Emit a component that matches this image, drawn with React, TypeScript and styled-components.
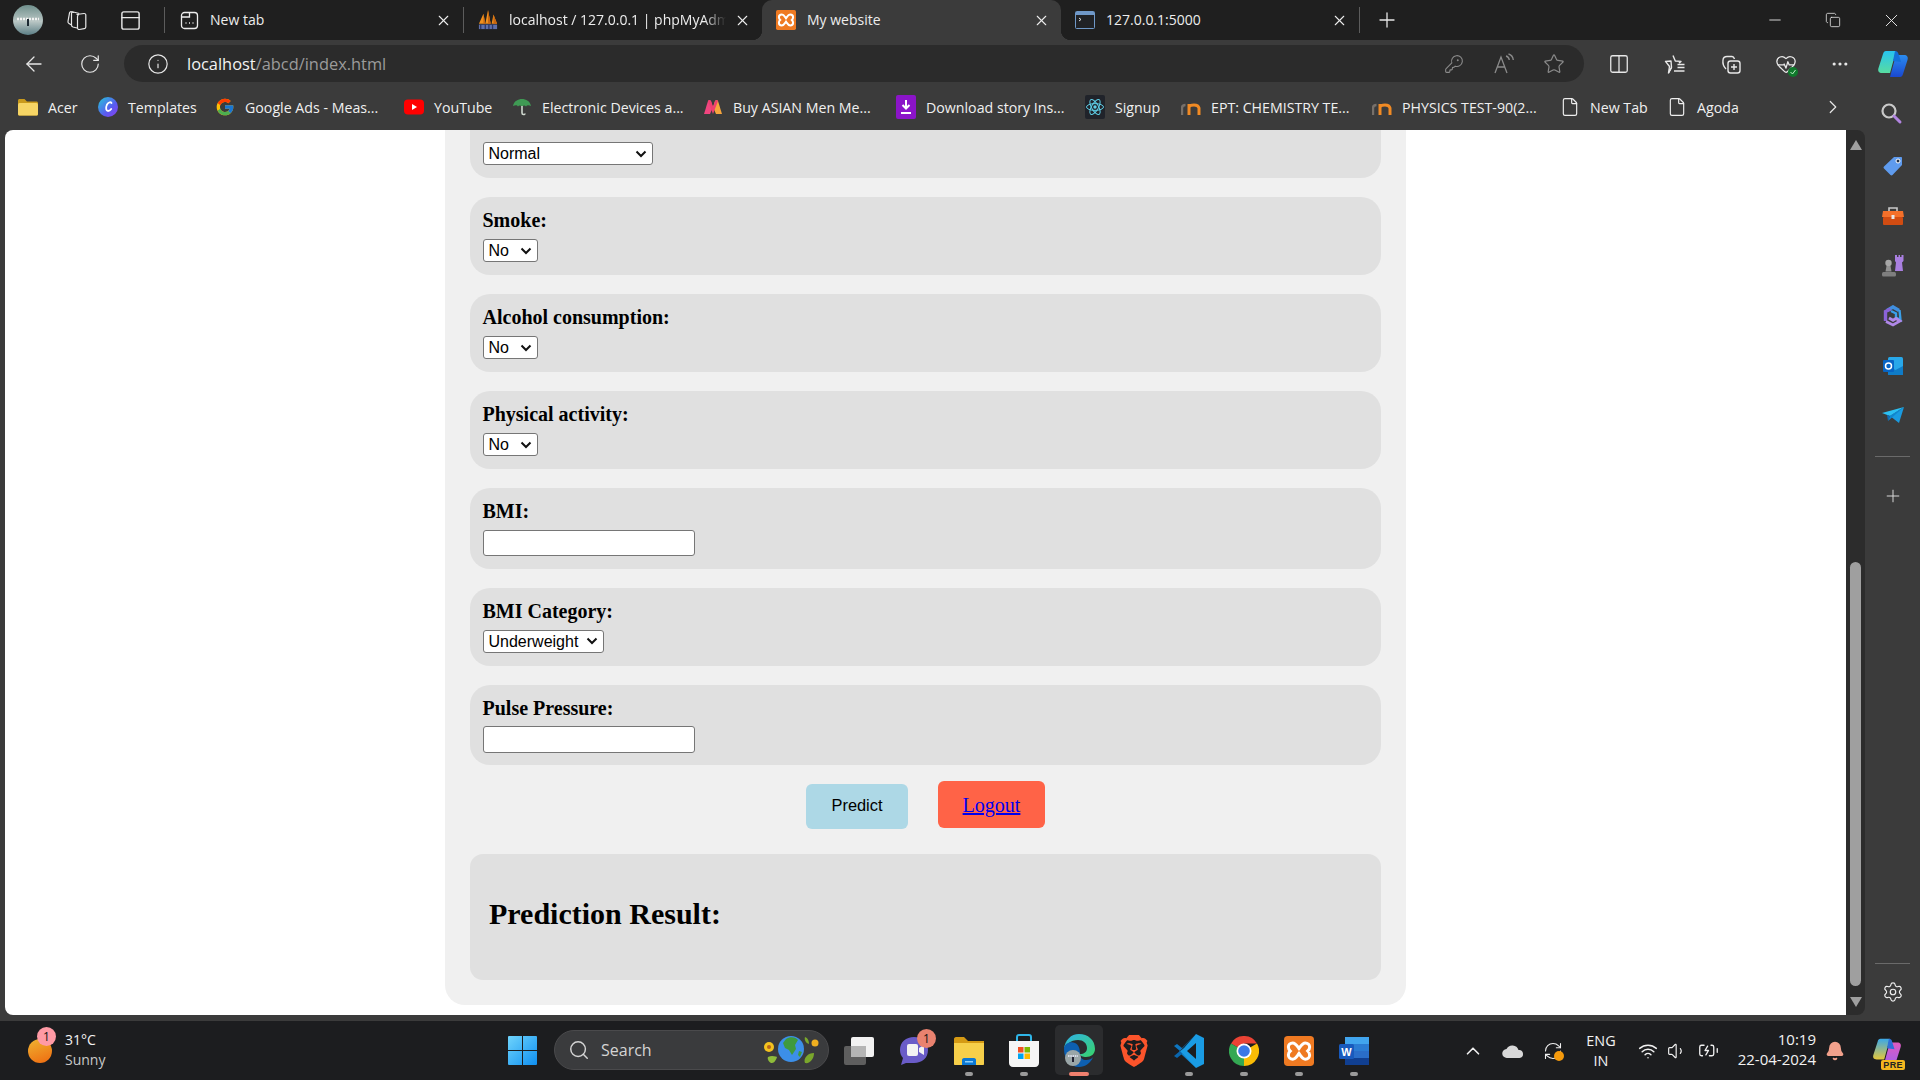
import React from "react";
import styled, { createGlobalStyle } from "styled-components";
import {
  ArrowLeft, RotateCw, Info, KeyRound, Star, Columns2, HeartPulse, MoreHorizontal, X, Plus, Minus, Search,
  Settings, ChevronRight, ChevronUp, File, Wifi, Volume1, BatteryCharging, RefreshCw, Bell, Copy, PanelTop,
} from "lucide-react";
import { FcGoogle } from "react-icons/fc";
import { SiBrave } from "react-icons/si";

const Global = createGlobalStyle`
  html, body { margin: 0; padding: 0; width: 1920px; height: 1080px; overflow: hidden; background: #3b3b3b; }
  * { box-sizing: border-box; }
`;

const UI = `"Open Sans", "Noto Sans", sans-serif`;
const SERIF = `"Liberation Serif", "Times New Roman", serif`;
const ARIAL = `"Liberation Sans", Arial, sans-serif`;
const CHEVRON = `url("data:image/svg+xml,%3Csvg xmlns='http://www.w3.org/2000/svg' width='12' height='8' viewBox='0 0 12 8'%3E%3Cpath d='M1.5 1.5 6 6l4.500-4.500' fill='none' stroke='%23111' stroke-width='2'/%3E%3C/svg%3E")`;

const Shell = styled.div`
  width: 1920px; height: 1080px; display: flex; flex-direction: column; background: #3b3b3b; overflow: hidden;
  font-family: ${UI};
`;

/* ---------- title bar ---------- */
const TitleBar = styled.div`height: 40px; background: #1f1f1f; display: flex; align-items: stretch; flex: none;`;
const TitleSlot = styled.div<{ $w: number }>`
  width: ${(p) => p.$w}px; flex: none; display: flex; align-items: center; justify-content: center; color: #e8e8e8;
`;
const TitleLead = styled.div`width: 164px; flex: none; display: flex; align-items: center; padding-left: 13px; color: #e8e8e8;`;
const LeadSlot = styled.div<{ $gap: number }>`width: 30px; margin-left: ${(p) => p.$gap}px; display: flex; align-items: center; justify-content: center;`;
const Divider = styled.div`width: 1px; height: 26px; margin-top: 7px; background: #5c5c5c; flex: none;`;
const Tab = styled.div<{ $active?: boolean }>`
  position: relative; width: ${(p) => (p.$active ? 299 : 298)}px; flex: none; display: flex; align-items: center;
  padding: 0 11px 0 14px; color: #ededed; font-size: 14px;
  background: ${(p) => (p.$active ? "#3b3b3b" : "transparent")};
  border-radius: ${(p) => (p.$active ? "10px 10px 0 0" : "0")};
  ${(p) =>
    p.$active
      ? `&::before, &::after { content: ""; position: absolute; bottom: 0; width: 10px; height: 10px; }
         &::before { left: -10px; background: radial-gradient(circle at 0 0, transparent 10px, #3b3b3b 10.5px); }
         &::after { right: -10px; background: radial-gradient(circle at 100% 0, transparent 10px, #3b3b3b 10.5px); }`
      : ""}
`;
const TabIcon = styled.span`width: 20px; height: 20px; flex: none; display: flex; align-items: center; justify-content: center; margin-right: 11px;`;
const TabTitle = styled.span`flex: 1; min-width: 0; overflow: hidden; white-space: nowrap; margin-right: 8px; margin-top: -1px;`;
const TabTitleFaded = styled(TabTitle)`
  -webkit-mask-image: linear-gradient(to right, #000 90%, transparent);
  mask-image: linear-gradient(to right, #000 90%, transparent);
`;
const WindowControls = styled.div`margin-left: auto; display: flex;`;

/* ---------- toolbar ---------- */
const Toolbar = styled.div`height: 48px; flex: none; display: flex; align-items: flex-start; padding-top: 5px;`;
const NavSlot = styled.div<{ $w: number }>`
  width: ${(p) => p.$w}px; height: 37px; flex: none; display: flex; align-items: center; justify-content: center; color: #e6e6e6;
`;
const AddressBar = styled.div`
  width: 1460px; height: 37px; flex: none; background: #2b2b2b; border-radius: 19px; display: flex; align-items: center;
  padding-left: 23px; margin-left: 12px; color: #e6e6e6;
`;
const Url = styled.div`margin-left: 18px; font-size: 16.4px; color: #9b9b9b; white-space: nowrap;`;
const UrlHost = styled.span`color: #f2f2f2;`;
const AddressTools = styled.div`margin-left: auto; display: flex; margin-right: 5px; color: #8b8b8b;`;
const AddressTool = styled.div`width: 50px; height: 37px; display: flex; align-items: center; justify-content: center;`;
const ToolbarRight = styled.div`display: flex; margin-left: 7px;`;
const ToolSlot = styled.div<{ $w: number }>`
  width: ${(p) => p.$w}px; height: 37px; display: flex; align-items: center; justify-content: center; color: #e8e8e8;
`;

/* ---------- bookmarks ---------- */
const BookmarksBar = styled.div`height: 42px; flex: none; display: flex; align-items: flex-start; padding-left: 18px; padding-top: 7px;`;
const Bookmark = styled.div<{ $w: number }>`
  width: ${(p) => p.$w}px; flex: none; height: 24px; display: flex; align-items: center; gap: 10px; margin-right: 20px;
  color: #f0f0f0; font-size: 14.2px; white-space: nowrap;
`;
const BookmarkIcon = styled.span`width: 20px; height: 20px; flex: none; display: flex; align-items: center; justify-content: center; color: #eee;`;
const BookmarkMore = styled.div`width: 24px; height: 24px; margin-left: 60px; color: #e6e6e6; display: flex; align-items: center; justify-content: center;`;
const SearchSlot = styled.div`width: 24px; height: 24px; margin-left: 34px; margin-top: 6px; display: flex; align-items: center; justify-content: center;`;

/* ---------- main ---------- */
const Middle = styled.div`flex: 1; min-height: 0; display: flex; align-items: stretch;`;
const Viewport = styled.div`
  margin-left: 5px; margin-bottom: 6px; flex: 1; min-width: 0; background: #fff; border-top-left-radius: 8px; border-bottom-left-radius: 8px;
  overflow: hidden; padding-left: 440px;
`;
const Container = styled.main`
  width: 961px; height: 875px; background: #f0f0f0; border-radius: 0 0 20px 20px; padding: 0 25px; display: flex; flex-direction: column;
`;
const Group = styled.div`
  background: #e0e0e0; border-radius: 20px; padding: 12px 12.5px 13px; margin-bottom: 19px; flex: none;
`;
const ClippedGroup = styled(Group)`
  height: 48px; padding-top: 12px; border-radius: 0 0 20px 20px;
`;
const Label = styled.label`
  display: block; font-family: ${SERIF}; font-weight: 700; font-size: 20px; line-height: 22px; color: #000; margin-bottom: 8px;
`;
const Select = styled.select<{ $w: number }>`
  display: block; width: ${(p) => p.$w}px; height: 23px; font-family: ${ARIAL}; font-size: 16px; color: #000;
  appearance: none; -webkit-appearance: none;
  background: #fff ${CHEVRON} no-repeat right 5px center;
  border: 1px solid #767676; border-radius: 3px; padding: 0 0 0 5px; margin: 0;
`;
const TextInput = styled.input`
  display: block; width: 212px; height: 26.5px; background: #fff; border: 1px solid #767676; border-radius: 3px; margin: 0; padding: 0 4px;
`;
const InputGroup = styled(Group)`padding-bottom: 12.5px;`;
const InputLabel = styled(Label)`margin-bottom: 7.5px;`;
const ButtonRow = styled.div`display: flex; justify-content: center; align-items: flex-start; gap: 30px; margin-top: -3px; height: 48px; flex: none;`;
const PredictButton = styled.button`
  width: 102px; height: 45px; margin-top: 3px; background: #add8e6; border: none; border-radius: 6px; color: #000;
  font-family: ${ARIAL}; font-size: 16.4px; padding: 0 0 3px;
`;
const LogoutBox = styled.div`
  width: 107px; height: 47px; background: #ff6347; border-radius: 6px; display: flex; align-items: center; justify-content: center;
  font-family: ${SERIF}; font-size: 20px; padding-top: 2px;
`;
const LogoutLink = styled.a`color: #0000ee; text-decoration: underline;`;
const ResultBox = styled.section`
  height: 126px; margin-top: 25px; flex: none; background: #e0e0e0; border-radius: 13px; display: flex; align-items: center; padding: 0 0 6px 19px;
`;
const ResultTitle = styled.h2`margin: 0; font-family: ${SERIF}; font-weight: 700; font-size: 30px; color: #000;`;

/* ---------- scrollbar + sidebar ---------- */
const ScrollTrack = styled.div`
  width: 19px; flex: none; margin-bottom: 6px; background: #2c2c2c; border-radius: 0 8px 8px 0; display: flex; flex-direction: column; align-items: center; padding-top: 10px;
`;
const ArrowUp = styled.div`width: 0; height: 0; border-left: 6.5px solid transparent; border-right: 6.5px solid transparent; border-bottom: 10px solid #9f9f9f;`;
const Thumb = styled.div`width: 11px; height: 424px; margin-top: 412px; background: #9f9f9f; border-radius: 6px;`;
const ArrowDown = styled.div`width: 0; height: 0; margin-top: 11px; border-left: 6.5px solid transparent; border-right: 6.5px solid transparent; border-top: 10px solid #9f9f9f;`;
const Sidebar = styled.aside`width: 55px; flex: none; display: flex; flex-direction: column; align-items: center; padding: 11px 0 9px;`;
const SideSlot = styled.div`width: 55px; height: 50px; flex: none; display: flex; align-items: center; justify-content: center; color: #d8d8d8;`;
const SideRule = styled.div`width: 35px; height: 1px; background: #6a6a6a; flex: none; margin: 15px 0 14px;`;
const SideFoot = styled.div`margin-top: auto; display: flex; flex-direction: column; align-items: center;`;
const SideFootRule = styled.div`width: 35px; height: 1px; background: #6a6a6a; margin-bottom: 8px;`;
const GearSlot = styled.div`width: 55px; height: 40px; display: flex; align-items: center; justify-content: center; color: #eee;`;

/* ---------- taskbar ---------- */
const Taskbar = styled.footer`height: 59px; flex: none; background: #1c1d1f; display: flex; align-items: stretch; color: #f2f2f2; position: relative;`;
const Weather = styled.div`width: 494px; flex: none; padding-left: 28px; display: flex; align-items: center; gap: 13px; font-size: 14px;`;
const WeatherIcon = styled.div`
  position: relative; width: 24px; height: 24px; margin-top: 1px; border-radius: 50%; background: linear-gradient(160deg, #efb431, #ee6a10); flex: none;
`;
const WeatherBadge = styled.span`
  position: absolute; left: 9px; top: -12px; width: 19px; height: 19px; border-radius: 50%; background: #ff9aa5; color: #111; font-size: 12px;
  display: flex; align-items: center; justify-content: center;
`;
const WeatherText = styled.div`line-height: 20px; margin-top: -1px;`;
const WeatherSub = styled.div`color: #c9c9c9;`;
const StartSlot = styled.div`width: 29px; margin-left: 14px; flex: none; display: flex; align-items: center;`;
const SearchPill = styled.div`
  width: 275px; height: 40px; margin: 9px 0 0 17px; flex: none; border-radius: 20px; background: #3a3b3d; border: 1px solid #4a4a4c; display: flex; align-items: center;
  padding-left: 13px; gap: 11px; color: #d4d4d4; font-size: 16px;
`;
const SearchArt = styled.span`margin-left: auto; margin-right: 7px; display: flex;`;
const TaskIcons = styled.div`display: flex; margin-left: 2px;`;
const TaskIconSlot = styled.div<{ $active?: boolean }>`
  position: relative; width: 55px; height: 59px; flex: none; display: flex; align-items: center; justify-content: center;
  ${(p) => (p.$active ? `&::before { content: ""; position: absolute; left: 4px; right: 3px; top: 4px; bottom: 5px; background: #2b2c2e; border-radius: 5px; }` : "")}
  & > svg { position: relative; }
`;
const RunPill = styled.span<{ $active?: boolean }>`
  position: absolute; bottom: 4px; left: 50%; transform: translateX(-50%); height: 4px; border-radius: 2px;
  width: ${(p) => (p.$active ? 20 : 8)}px; background: ${(p) => (p.$active ? "#f0806e" : "#9a9a9a")};
`;
const TaskBadge = styled.span`
  position: absolute; left: 31px; top: 8px; width: 19px; height: 19px; border-radius: 50%; background: #e9826f; color: #111; font-size: 12px;
  display: flex; align-items: center; justify-content: center;
`;
const Tray = styled.div`display: flex; margin-left: 72px; align-items: center;`;
const TraySlot = styled.div<{ $w: number }>`width: ${(p) => p.$w}px; flex: none; position: relative; display: flex; align-items: center; justify-content: center; color: #f0f0f0;`;
const SyncDot = styled.span`position: absolute; right: 9px; bottom: 0; width: 10px; height: 10px; border-radius: 50%; background: #f59a0c;`;
const Lang = styled.div`width: 56px; margin-right: 5px; flex: none; text-align: center; font-size: 14.4px; line-height: 20px; margin-top: 1px;`;
const Clock = styled.div`width: 92px; flex: none; text-align: right; font-size: 15px; line-height: 20px; white-space: nowrap; margin-top: -3px;`;
const CopilotPre = styled.span`
  position: absolute; right: 2px; bottom: 10px; background: #f3b61f; color: #222; font-family: ${ARIAL}; font-weight: 700; font-size: 9px; line-height: 10px; padding: 0 2px; border-radius: 2px; letter-spacing: 0.4px;
`;
const CopilotBox = styled.div`position: relative; width: 40px; height: 59px; margin-left: 13px; display: flex; align-items: center; justify-content: center;`;
const HealthBox = styled.div`position: relative; display: flex;`;
const HealthMark = styled.span`
  position: absolute; right: -1px; bottom: -2px; width: 10px; height: 10px; display: flex;
`;

/* ---------- drawings ---------- */
const Avatar = () => (
  <svg width="30" height="30" viewBox="0 0 30 30">
    <defs><linearGradient id="av" x1="0" y1="0" x2="0" y2="1"><stop offset="0" stopColor="#6f8f8c" /><stop offset=".55" stopColor="#b9c6c4" /><stop offset="1" stopColor="#5c7f86" /></linearGradient></defs>
    <circle cx="15" cy="15" r="15" fill="url(#av)" />
    <path d="M4 14h22" stroke="#f2f2f2" strokeWidth="2.5" strokeDasharray="2 1" />
    <path d="M14 14h2v7h-2z" fill="#1c2a33" />
  </svg>
);
const Workspaces = () => (
  <svg width="24" height="24" viewBox="0 0 24 24" fill="none" stroke="currentColor" strokeWidth="1.2">
    <path d="M11.500 6.500 19 5.500c1-.1 1.800.6 1.800 1.500v12c0 1-.6 1.600-1.500 1.700l-5 .8c-1 .1-1.800-.6-1.800-1.500V8.500c0-1 .6-1.800 1.500-2" />
    <path d="M12 20 8 19c-1-.3-1.500-1-1.500-2V5.500c0-1 .8-1.800 1.800-1.500l6 1.500" />
    <path d="M6.500 17 4 15.500c-.8-.5-1.200-1.200-1-2.200L4.500 5c.2-1 1-1.500 2-1.200L9 4.500" />
  </svg>
);
const TabNew = () => (
  <svg width="19" height="19" viewBox="0 0 19 19" fill="none" stroke="currentColor" strokeWidth="1.3">
    <rect x="1.5" y="1.5" width="16" height="16" rx="3" /><path d="M1.5 6h8V1.5" />
    <path d="M5.5 12h1M9 12h1M12.5 12h1" strokeWidth="1.6" />
  </svg>
);
const PmaIcon = () => (
  <svg width="22" height="22" viewBox="0 0 22 22">
    <path d="M1 15 6 4l2 11zM8 15 11 0l3 15zM15 15l2-10 4 10z" fill="#f0901e" />
    <path d="M6 4l2 11H6zM11 0l3 15h-3zM17 5l4 10h-4z" fill="#c9660f" />
    <rect x="1" y="16" width="20" height="5" fill="#5f6fa8" />
    <path d="M3 16v5M8 16v5M12 16v5M16 16v5" stroke="#2a3566" strokeWidth="1.4" />
  </svg>
);
const XamppGlyph: React.FC<{ size: number; r: number }> = ({ size, r }) => (
  <svg width={size} height={size} viewBox="0 0 24 24">
    <rect width="24" height="24" rx={r} fill="#ef7a22" />
    <path d="M7 5.500c-2 0-3.500 1.500-3.500 3.300S5 12 5 12s-1.500 1.300-1.500 3.200S5 18.500 7 18.500c2.200 0 3.200-2 5-4.500 1.800 2.500 2.800 4.500 5 4.500s3.500-1.500 3.500-3.300S19 12 19 12s1.500-1.300 1.500-3.200S19 5.500 17 5.500c-2.200 0-3.200 2-5 4.500-1.800-2.500-2.800-4.500-5-4.500Z" fill="none" stroke="#fff" strokeWidth="2.400" />
  </svg>
);
const Terminal = () => (
  <svg width="20" height="20" viewBox="0 0 20 20">
    <rect x=".5" y="1.500" width="19" height="17" rx="1" fill="#202226" stroke="#6f98c8" />
    <rect x="1" y="2" width="18" height="3" fill="#6f98c8" />
    <path d="m4 8 2 1.500L4 11" stroke="#ddd" strokeWidth="1" fill="none" />
  </svg>
);
const Folder = () => (
  <svg width="20" height="20" viewBox="0 0 20 20">
    <path d="M0 3.500C0 2.700.7 2 1.500 2h5L9 4.500h9.500c.8 0 1.500.7 1.500 1.500v11c0 .8-.7 1.500-1.500 1.500h-17C.7 18.500 0 17.800 0 17Z" fill="#c99a1c" />
    <rect x="0" y="6" width="20" height="12.500" rx="1.500" fill="#f6d565" />
  </svg>
);
const Canva = () => (
  <svg width="20" height="20" viewBox="0 0 20 20">
    <defs><linearGradient id="cv" x1="0" y1="0" x2="1" y2="1"><stop offset="0" stopColor="#22c8d8" /><stop offset=".6" stopColor="#5a5bf0" /><stop offset="1" stopColor="#8b3df0" /></linearGradient></defs>
    <circle cx="10" cy="10" r="10" fill="url(#cv)" />
    <path d="M13.500 6c-1-1.500-3.500-.5-4.700 2-1.200 2.700-.8 6 1.200 6 1.300 0 2.500-1 3.200-2" fill="none" stroke="#fff" strokeWidth="1.800" strokeLinecap="round" />
  </svg>
);
const YouTube = () => (
  <svg width="20" height="16" viewBox="0 0 20 16">
    <rect width="20" height="15" y=".5" rx="4" fill="#f00" /><path d="m8 5 5 3-5 3z" fill="#fff" />
  </svg>
);
const Umbrella = () => (
  <svg width="20" height="20" viewBox="0 0 20 20">
    <path d="M1 9c1-5 5-7 9-7s8 2 9 7c-2.500-1-4-1-5 .5-1-1.500-2.500-1.500-4 0-1.500-1.500-3-1.500-4 0C5 8 3.500 8 1 9Z" fill="#3f9a54" />
    <path d="M10 9v7c0 2 3 2 3 .5" stroke="#cfd8cf" strokeWidth="1.600" fill="none" />
  </svg>
);
const Myntra = () => (
  <svg width="20" height="16" viewBox="0 0 20 16">
    <path d="M1 15 5 2c1-1.500 2-1 3 0l2 6-3 7Z" fill="#f0457f" /><path d="M19 15 15 2c-1-1.500-2-1-3 0l-2 6 3 7Z" fill="#f6a53c" /><path d="M5 2c1-1.500 2-1 3 0l2 6 2-6c1-1 2-1.500 3 0l-5 13Z" fill="#ef3f6f" />
  </svg>
);
const DownloadTile = () => (
  <svg width="20" height="24" viewBox="0 0 20 24">
    <rect width="20" height="24" rx="2" fill="#8b14c8" />
    <path d="M10 5v8M6.500 10l3.500 3.500 3.500-3.500M5 18h10" stroke="#fff" strokeWidth="2" fill="none" />
  </svg>
);
const ReactTile = () => (
  <svg width="20" height="24" viewBox="0 0 20 24">
    <rect width="20" height="24" rx="2" fill="#20232a" />
    <g fill="none" stroke="#5fd0e8" strokeWidth="1">
      <ellipse cx="10" cy="12" rx="8.500" ry="3.400" /><ellipse cx="10" cy="12" rx="8.500" ry="3.400" transform="rotate(60 10 12)" /><ellipse cx="10" cy="12" rx="8.500" ry="3.400" transform="rotate(120 10 12)" />
    </g>
    <circle cx="10" cy="12" r="1.700" fill="#5fd0e8" />
  </svg>
);
const Moodle = () => (
  <svg width="20" height="15" viewBox="0 0 20 15">
    <path d="M1 15V8c0-2 1.500-3 3.500-3" fill="none" stroke="#77706a" strokeWidth="2.400" />
    <path d="M8 15V4M8 7c1-2.500 9-3.500 10 1v7" fill="none" stroke="#f08a24" strokeWidth="3" />
  </svg>
);
const FavStar = () => (
  <svg width="22" height="22" viewBox="0 0 22 22" fill="none" stroke="currentColor" strokeWidth="1.400" strokeLinejoin="round">
    <path d="M9 2.500 11.300 8l5.700.4-2 1.700M7.500 14.500 4.500 20l1-6.500L1.500 8.400 7 8Z" /><path d="M7.500 14.500 4.500 20M13.500 11.500h7M13.500 14.500h7M10 18h10.500" />
  </svg>
);
const Collections = () => (
  <svg width="24" height="24" viewBox="0 0 24 24" fill="none" stroke="currentColor" strokeWidth="1.400">
    <path d="M7 17c-2-2-3.500-5.500-3-9 .2-2 1.500-3.500 4-3.500h5c1.500 0 2 1 2.500 2.500" />
    <rect x="9" y="9" width="12" height="12" rx="2.500" /><path d="M15 12v6M12 15h6" />
  </svg>
);
const Health = () => (
  <HealthBox>
    <HeartPulse size={22} strokeWidth={1.4} />
    <HealthMark>
      <svg width="10" height="10" viewBox="0 0 10 10">
        <circle cx="5" cy="5" r="5" fill="#0f7a2c" /><path d="m2.500 5 2 2 3-4" stroke="#bdf0c8" fill="none" />
      </svg>
    </HealthMark>
  </HealthBox>
);
const ReadAloud = () => (
  <svg width="22" height="22" viewBox="0 0 22 22" fill="none" stroke="currentColor" strokeWidth="1.300">
    <path d="M2 20 8 4l6 16M4.500 14h7" /><path d="M13 3c2 .5 3 2 3.300 4M15.500 1c3 .8 4.500 3 4.800 6" />
  </svg>
);
const Copilot: React.FC<{ size: number; pre?: boolean }> = ({ size, pre }) => (
  <svg width={size} height={size} viewBox="0 0 32 32">
    <defs>
      <linearGradient id={pre ? "cpa" : "cqa"} x1="0" y1="0" x2="0" y2="1"><stop offset="0" stopColor={pre ? "#3aa8e8" : "#27c4f0"} /><stop offset="1" stopColor={pre ? "#e4c73a" : "#58dca0"} /></linearGradient>
      <linearGradient id={pre ? "cpb" : "cqb"} x1="0" y1="0" x2="0" y2="1"><stop offset="0" stopColor={pre ? "#e05ac0" : "#2a8cf0"} /><stop offset="1" stopColor={pre ? "#a860e8" : "#1a48d0"} /></linearGradient>
    </defs>
    <path d="M9 3h10l-6 22H5C2 25 .5 23 1.500 20L6 6c.5-2 1.500-3 3-3Z" fill={`url(#${pre ? "cpa" : "cqa"})`} />
    <path d="M23 29H13l6-22h8c3 0 4.500 2 3.500 5L26 26c-.5 2-1.500 3-3 3Z" fill={`url(#${pre ? "cpb" : "cqb"})`} />
    <path d="M18 3c2 0 3 1 3.500 3L24 14l-8-1Z" fill={pre ? "#2f6fd8" : "#1470d8"} />
  </svg>
);
const Tag = () => (
  <svg width="22" height="22" viewBox="0 0 22 22">
    <path d="M12 2h7c.6 0 1 .4 1 1v7L10.500 20c-.6.600-1.400.600-2 0L2 13.500c-.6-.6-.6-1.400 0-2Z" fill="#5f9bee" /><circle cx="16" cy="6" r="2" fill="#22324a" stroke="#fff" />
  </svg>
);
const Toolbox = () => (
  <svg width="24" height="22" viewBox="0 0 24 22">
    <path d="M8 6V3h8v3" fill="none" stroke="#c9c9c9" strokeWidth="1.600" />
    <path d="M2 6h20l1 6H1Z" fill="#f4702a" /><rect x="2" y="12" width="20" height="8" rx="1" fill="#d14c12" /><rect x="10.500" y="10" width="3" height="4" fill="#e8e8e8" />
  </svg>
);
const Chess = () => (
  <svg width="24" height="24" viewBox="0 0 24 24">
    <path d="M14 1h2v2h1.500V1h1.500v2h1.500V1h2v6l-1.500 1.500 1 8.500H14l1-8.500L14 7Z" fill="#a97fe0" />
    <circle cx="7.500" cy="9" r="3.200" fill="#a7a7a7" /><path d="M5.500 12h4l1 5.500h-6Z" fill="#929292" /><rect x="1" y="18" width="14" height="4.500" rx="1.500" fill="#7f7f7f" />
  </svg>
);
const M365 = () => (
  <svg width="22" height="22" viewBox="0 0 22 22" fill="none">
    <path d="M5 5.500 11 2l6 3.500" stroke="#3f8fe0" strokeWidth="3.600" />
    <path d="M17.500 5 18.500 15 14 12.500V8.500L9 6" stroke="#3aa0ea" strokeWidth="2.400" />
    <path d="M3.500 16V6.500L8.500 4" stroke="#8a62d8" strokeWidth="3.400" />
    <path d="M4 16.500 11 20l7-4-4-2.500-3 1.800L7 13" stroke="#b088e8" strokeWidth="2.800" />
  </svg>
);
const Outlook = () => (
  <svg width="20" height="20" viewBox="0 0 20 20">
    <rect x="5" y="1" width="15" height="18" rx="1.500" fill="#28a8ea" /><path d="M5 10l7.500 4L20 10v8c0 .6-.5 1-1 1H6c-.6 0-1-.4-1-1Z" fill="#0f7cc8" />
    <rect y="4" width="11" height="12" rx="1" fill="#0764c4" /><circle cx="5.500" cy="10" r="3" fill="none" stroke="#fff" strokeWidth="1.500" />
  </svg>
);
const SendIcon = () => (
  <svg width="22" height="18" viewBox="0 0 22 18">
    <path d="M0 6 22 0 8 9Z" fill="#2bc0f2" /><path d="M22 0 17 16 8 9Z" fill="#1a9be0" /><path d="m5 8 3 1-2 5Z" fill="#0d6bb8" /><path d="M22 0 8 9l-2 5Z" fill="#0e86cf" />
  </svg>
);
const WinLogo = () => (
  <svg width="29" height="29" viewBox="0 0 29 29">
    <defs><linearGradient id="wl" x1="0" y1="0" x2="1" y2="1"><stop offset="0" stopColor="#6fd4fc" /><stop offset="1" stopColor="#0f8ff0" /></linearGradient></defs>
    <path d="M0 1a1 1 0 0 1 1-1h13v14H0ZM15 0h13a1 1 0 0 1 1 1v13H15ZM0 15h14v14H1a1 1 0 0 1-1-1ZM15 15h14v13a1 1 0 0 1-1 1H15Z" fill="url(#wl)" />
  </svg>
);
const Globe = () => (
  <svg width="58" height="34" viewBox="0 0 58 34">
    <circle cx="6" cy="14" r="5" fill="#f3c21f" /><circle cx="6" cy="14" r="2" fill="#b8621a" />
    <path d="M5 24c4-2 9 0 9 0s-2 7-6 6c-2-1-4-4-3-6Z" fill="#8fbc3a" />
    <circle cx="28" cy="16" r="13" fill="#3c8fe8" />
    <path d="M23 6c4-3 10-2 12 1l-3 5 1 4-4 6-3-5-4-2-2-5ZM36 18l3 1-2 5-2-2Z" fill="#3f9a3e" />
    <path d="M42 4c3 1 4 4 4 7-3-1-5-4-4-7ZM42 30c-2-5 3-10 9-10 0 6-4 11-9 10Z" fill="#7aa72c" />
    <circle cx="52" cy="10" r="3.500" fill="#f0b020" />
  </svg>
);
const TaskView = () => (
  <svg width="30" height="28" viewBox="0 0 30 28">
    <rect x="0" y="9" width="22" height="19" rx="2" fill="#5e5e5e" /><rect x="7" y="0" width="23" height="20" rx="2" fill="#f2f2f2" /><rect x="7" y="9" width="15" height="11" fill="#b5b5b5" />
  </svg>
);
const Meet = () => (
  <svg width="28" height="30" viewBox="0 0 28 30">
    <path d="M14 1c8 0 14 5 14 13s-6 13-14 13H6L1 29l2-7C1 20 0 17 0 14 0 6 6 1 14 1Z" fill="#6a5cc8" />
    <rect x="7" y="8" width="11" height="12" rx="2" fill="#f3f3f3" /><path d="m19 12 5-3v10l-5-3Z" fill="#f3f3f3" />
  </svg>
);
const Files = () => (
  <svg width="30" height="30" viewBox="0 0 30 30">
    <path d="M0 3c0-1 .8-2 2-2h8l4 4h16v6H0Z" fill="#d59a14" />
    <path d="M0 7h30v21c0 .6-.4 1-1 1H1c-.6 0-1-.4-1-1Z" fill="#f6cf4a" />
    <path d="M8 24c0-1 .6-2 2-2h10c1.400 0 2 1 2 2v5H8Z" fill="#0b78d4" /><rect x="11" y="25" width="8" height="1.500" fill="#8fd0fa" />
  </svg>
);
const Store = () => (
  <svg width="30" height="34" viewBox="0 0 30 34">
    <path d="M8 9V3c0-1 .6-2 2-2h10c1.400 0 2 1 2 2v6" fill="none" stroke="#2fb6e8" strokeWidth="2" />
    <path d="M0 7h30v22c0 2-1.500 4-4 4H4c-2.500 0-4-2-4-4Z" fill="#f5f5f5" />
    <rect x="9" y="13" width="5.500" height="5.500" fill="#f25022" /><rect x="15.500" y="13" width="5.500" height="5.500" fill="#7fba00" />
    <rect x="9" y="19.500" width="5.500" height="5.500" fill="#00a4ef" /><rect x="15.500" y="19.500" width="5.500" height="5.500" fill="#ffb900" />
  </svg>
);
const Edge = () => (
  <svg width="32" height="34" viewBox="0 0 32 34">
    <defs><linearGradient id="eg" x1="0" y1="0" x2="1" y2="1"><stop offset="0" stopColor="#2fb1e8" /><stop offset="1" stopColor="#38d46a" /></linearGradient></defs>
    <path d="M1 15C2 6 8 0 16 0c9 0 16 6 16 15 0 5-4 8-9 8-3 0-6-1-6-3 4 0 7-2 7-6 0-5-4-8-9-8-7 0-13 5-14 9Z" fill="url(#eg)" />
    <path d="M1 15c0-5 6-8 11-6 4 2 5 6 5 11 0 4 3 6 6 6 3 0 6-1 7-3-2 6-8 10-14 10C7 33 1 25 1 15Z" fill="#0d5fb0" />
    <circle cx="10" cy="24" r="8" fill="#9aa6a8" /><path d="M5 22h10" stroke="#eef" strokeWidth="1.500" strokeDasharray="1.500 .8" /><rect x="9" y="23" width="2" height="5" fill="#223" />
  </svg>
);
const VSCode = () => (
  <svg width="30" height="34" viewBox="0 0 30 34">
    <path d="M22 0 30 4v26l-8 4L5 18l5-4Z" fill="#1a9ce4" />
    <path d="M22 0 6 17 0 12l3-2 5 4Z" fill="#0e76c0" />
    <path d="M22 34 6 17l-6 5 3 2 5-4Z" fill="#0a66ad" />
    <path d="m13 17 9-8v16Z" fill="#1c1d1f" />
  </svg>
);
const Chrome = () => (
  <svg width="30" height="30" viewBox="0 0 30 30">
    <path d="M15 15 2 7.500A15 15 0 0 1 28 7.500H15Z" fill="#ea4335" />
    <path d="M15 15 15 30A15 15 0 0 1 2 7.500Z" fill="#34a853" />
    <path d="M15 15 28 7.500A15 15 0 0 1 15 30Z" fill="#fbbc05" />
    <circle cx="15" cy="15" r="7.500" fill="#fff" /><circle cx="15" cy="15" r="5.800" fill="#3b78e7" />
  </svg>
);
const Word = () => (
  <svg width="30" height="30" viewBox="0 0 30 30">
    <rect x="6" y="1" width="24" height="28" rx="1.500" fill="#2a6ec9" /><rect x="6" y="1" width="24" height="7" fill="#41a5ee" /><rect x="6" y="8" width="24" height="7" fill="#2b7cd3" /><rect x="6" y="22" width="24" height="7" fill="#103f91" />
    <rect x="0" y="8" width="15" height="15" rx="1.500" fill="#185abd" />
    <text x="7.500" y="19.500" textAnchor="middle" fontFamily={ARIAL} fontSize="11" fontWeight="700" fill="#fff">W</text>
  </svg>
);
const OneDrive = () => (
  <svg width="22" height="16" viewBox="0 0 22 16"><path d="M5 15a4.500 4.500 0 0 1-.5-9A6.500 6.500 0 0 1 16.500 7 4 4 0 0 1 17.500 15Z" fill="#d8d8d8" /></svg>
);

const Field: React.FC<{ label: string; w?: number; options?: string[] }> = ({ label, w, options }) =>
  options ? (
    <Group>
      <Label>{label}</Label>
      <Select $w={w ?? 55}>{options.map((o) => <option key={o}>{o}</option>)}</Select>
    </Group>
  ) : (
    <InputGroup>
      <InputLabel>{label}</InputLabel>
      <TextInput type="text" />
    </InputGroup>
  );

const bookmarks: { icon: React.ReactNode; label: string; w: number }[] = [
  { icon: <Folder />, label: "Acer", w: 60 },
  { icon: <Canva />, label: "Templates", w: 97 },
  { icon: <FcGoogle size={22} />, label: "Google Ads - Meas...", w: 169 },
  { icon: <YouTube />, label: "YouTube", w: 88 },
  { icon: <Umbrella />, label: "Electronic Devices a...", w: 171 },
  { icon: <Myntra />, label: "Buy ASIAN Men Me...", w: 173 },
  { icon: <DownloadTile />, label: "Download story Ins...", w: 169 },
  { icon: <ReactTile />, label: "Signup", w: 76 },
  { icon: <Moodle />, label: "EPT: CHEMISTRY TE...", w: 171 },
  { icon: <Moodle />, label: "PHYSICS TEST-90(2...", w: 168 },
  { icon: <File size={20} strokeWidth={1.4} />, label: "New Tab", w: 87 },
  { icon: <File size={20} strokeWidth={1.4} />, label: "Agoda", w: 74 },
];

export default function App() {
  return (
    <Shell>
      <Global />
      <TitleBar>
        <TitleLead>
          <Avatar />
          <LeadSlot $gap={19}><Workspaces /></LeadSlot>
          <LeadSlot $gap={23}><PanelTop size={23} strokeWidth={1.5} /></LeadSlot>
        </TitleLead>
        <Divider />
        <Tab><TabIcon><TabNew /></TabIcon><TabTitle>New tab</TabTitle><X size={17} strokeWidth={1.5} /></Tab>
        <Divider />
        <Tab><TabIcon><PmaIcon /></TabIcon><TabTitleFaded>localhost / 127.0.0.1 | phpMyAdmin</TabTitleFaded><X size={17} strokeWidth={1.5} /></Tab>
        <Tab $active><TabIcon><XamppGlyph size={20} r={2} /></TabIcon><TabTitle>My website</TabTitle><X size={17} strokeWidth={1.5} /></Tab>
        <Tab><TabIcon><Terminal /></TabIcon><TabTitle>127.0.0.1:5000</TabTitle><X size={17} strokeWidth={1.5} /></Tab>
        <Divider />
        <TitleSlot $w={53}><Plus size={24} strokeWidth={1.3} /></TitleSlot>
        <WindowControls>
          <TitleSlot $w={58}><Minus size={18} strokeWidth={1.2} /></TitleSlot>
          <TitleSlot $w={58}><Copy size={16} strokeWidth={1.2} /></TitleSlot>
          <TitleSlot $w={58}><X size={21} strokeWidth={1.1} /></TitleSlot>
        </WindowControls>
      </TitleBar>

      <Toolbar>
        <NavSlot $w={68}><ArrowLeft size={24} strokeWidth={1.3} /></NavSlot>
        <NavSlot $w={44}><RotateCw size={22} strokeWidth={1.3} /></NavSlot>
        <AddressBar>
          <Info size={22} strokeWidth={1.3} />
          <Url><UrlHost>localhost</UrlHost>/abcd/index.html</Url>
          <AddressTools>
            <AddressTool><KeyRound size={20} strokeWidth={1.3} /></AddressTool>
            <AddressTool><ReadAloud /></AddressTool>
            <AddressTool><Star size={22} strokeWidth={1.3} /></AddressTool>
          </AddressTools>
        </AddressBar>
        <ToolbarRight>
          <ToolSlot $w={56}><Columns2 size={22} strokeWidth={1.4} /></ToolSlot>
          <ToolSlot $w={56}><FavStar /></ToolSlot>
          <ToolSlot $w={56}><Collections /></ToolSlot>
          <ToolSlot $w={54}><Health /></ToolSlot>
          <ToolSlot $w={53}><MoreHorizontal size={20} strokeWidth={1.8} /></ToolSlot>
          <ToolSlot $w={53}><Copilot size={32} /></ToolSlot>
        </ToolbarRight>
      </Toolbar>

      <BookmarksBar>
        {bookmarks.map((b) => (
          <Bookmark key={b.label} $w={b.w}><BookmarkIcon>{b.icon}</BookmarkIcon>{b.label}</Bookmark>
        ))}
        <BookmarkMore><ChevronRight size={22} strokeWidth={1.3} /></BookmarkMore>
        <SearchSlot>
          <svg width="24" height="24" viewBox="0 0 24 24" fill="none">
            <circle cx="10" cy="10" r="6.500" stroke="#c9c9c9" strokeWidth="2.200" />
            <path d="m15 15 6 6" stroke="#b184e0" strokeWidth="3" strokeLinecap="round" />
          </svg>
        </SearchSlot>
      </BookmarksBar>

      <Middle>
        <Viewport>
          <Container>
            <ClippedGroup>
              <Select $w={170}><option>Normal</option></Select>
            </ClippedGroup>
            <Field label="Smoke:" options={["No", "Yes"]} />
            <Field label="Alcohol consumption:" options={["No", "Yes"]} />
            <Field label="Physical activity:" options={["No", "Yes"]} />
            <Field label="BMI:" />
            <Field label="BMI Category:" w={121} options={["Underweight", "Normal", "Overweight"]} />
            <Field label="Pulse Pressure:" />
            <ButtonRow>
              <PredictButton type="button">Predict</PredictButton>
              <LogoutBox><LogoutLink href="#">Logout</LogoutLink></LogoutBox>
            </ButtonRow>
            <ResultBox><ResultTitle>Prediction Result:</ResultTitle></ResultBox>
          </Container>
        </Viewport>
        <ScrollTrack>
          <ArrowUp />
          <Thumb />
          <ArrowDown />
        </ScrollTrack>
        <Sidebar>
          <SideSlot><Tag /></SideSlot>
          <SideSlot><Toolbox /></SideSlot>
          <SideSlot><Chess /></SideSlot>
          <SideSlot><M365 /></SideSlot>
          <SideSlot><Outlook /></SideSlot>
          <SideSlot><SendIcon /></SideSlot>
          <SideRule />
          <SideSlot><Plus size={20} strokeWidth={1.2} /></SideSlot>
          <SideFoot>
            <SideFootRule />
            <GearSlot><Settings size={22} strokeWidth={1.3} /></GearSlot>
          </SideFoot>
        </Sidebar>
      </Middle>

      <Taskbar>
        <Weather>
          <WeatherIcon><WeatherBadge>1</WeatherBadge></WeatherIcon>
          <WeatherText>31°C<WeatherSub>Sunny</WeatherSub></WeatherText>
        </Weather>
        <StartSlot><WinLogo /></StartSlot>
        <SearchPill>
          <Search size={22} strokeWidth={1.6} />
          Search
          <SearchArt><Globe /></SearchArt>
        </SearchPill>
        <TaskIcons>
          <TaskIconSlot><TaskView /></TaskIconSlot>
          <TaskIconSlot><Meet /><TaskBadge>1</TaskBadge></TaskIconSlot>
          <TaskIconSlot><Files /><RunPill /></TaskIconSlot>
          <TaskIconSlot><Store /><RunPill /></TaskIconSlot>
          <TaskIconSlot $active><Edge /><RunPill $active /></TaskIconSlot>
          <TaskIconSlot><SiBrave size={32} color="#fb542b" /></TaskIconSlot>
          <TaskIconSlot><VSCode /><RunPill /></TaskIconSlot>
          <TaskIconSlot><Chrome /><RunPill /></TaskIconSlot>
          <TaskIconSlot><XamppGlyph size={30} r={3} /><RunPill /></TaskIconSlot>
          <TaskIconSlot><Word /><RunPill /></TaskIconSlot>
        </TaskIcons>
        <Tray>
          <TraySlot $w={40}><ChevronUp size={22} strokeWidth={1.8} /></TraySlot>
          <TraySlot $w={40}><OneDrive /></TraySlot>
          <TraySlot $w={40}><RefreshCw size={20} strokeWidth={1.3} /><SyncDot /></TraySlot>
          <Lang>ENG<br />IN</Lang>
          <TraySlot $w={28}><Wifi size={20} strokeWidth={1.8} /></TraySlot>
          <TraySlot $w={30}><Volume1 size={20} strokeWidth={1.4} /></TraySlot>
          <TraySlot $w={32}><BatteryCharging size={21} strokeWidth={1.5} /></TraySlot>
          <Clock>10:19<br />22-04-2024</Clock>
          <TraySlot $w={38}><Bell size={20} fill="#f3a18c" color="#f3a18c" /></TraySlot>
          <CopilotBox><Copilot size={30} pre /><CopilotPre>PRE</CopilotPre></CopilotBox>
        </Tray>
      </Taskbar>
    </Shell>
  );
}
